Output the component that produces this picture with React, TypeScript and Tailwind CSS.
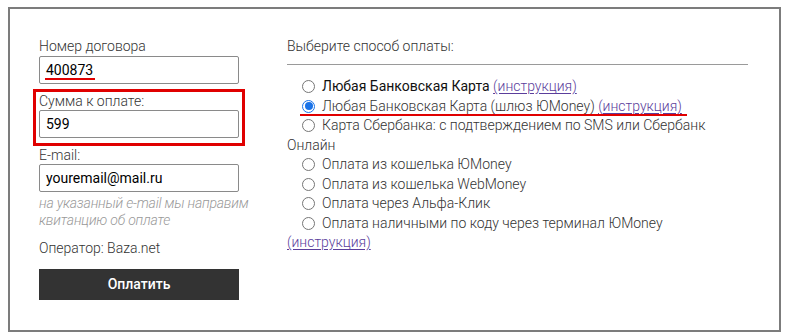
import React from "react";

const Radio = ({ checked = false }: { checked?: boolean }) => (
  <span
    className={
      "inline-block align-[-2px] w-[13px] h-[13px] rounded-full border ml-[15px] mr-[7px] relative " +
      (checked ? "border-[#1a73e8] border-[1.5px]" : "border-[#767676] bg-white")
    }
  >
    {checked && (
      <span className="absolute inset-[1.5px] rounded-full bg-[#1a73e8]" />
    )}
  </span>
);

const Link = ({ children }: { children: React.ReactNode }) => (
  <span className="text-[#5b3e9c] underline underline-offset-2">{children}</span>
);

export default function App() {
  return (
    <div
      className="bg-white w-[789px] h-[336px] pt-[7px] pl-[8px] text-[14px] text-[#333]"
      style={{ fontFamily: "Roboto, 'Liberation Sans', sans-serif" }}
    >
      <div className="w-[773px] h-[325px] border-2 border-[#7c7c7c] flex pt-[28px] pl-[29px]">
        {/* Left column */}
        <div className="w-[200px] flex flex-col">
          <div className="leading-[19px] font-light text-[#333]">Номер договора</div>
          <div className="relative h-[28px] border border-[#8a8a8a] rounded-[2px] pl-[6px] flex items-center text-black">
            400873
            <span className="absolute left-[5px] top-[21px] w-[50px] h-[2px] bg-[#e00000]" />
          </div>
          <div className="mt-[5px] -mx-[6px] border-[3px] border-[#e00000] px-[3px] pb-[5px]">
            <div className="leading-[18px] font-light">Сумма к оплате:</div>
            <div className="h-[28px] border border-[#8a8a8a] rounded-[2px] pl-[6px] flex items-center text-black">
              599
            </div>
          </div>
          <div className="leading-[18px] font-light">E-mail:</div>
          <div className="h-[28px] border border-[#8a8a8a] rounded-[2px] pl-[6px] flex items-center text-black">
            youremail@mail.ru
          </div>
          <div className="mt-[3px] w-[212px] leading-[17px] italic font-light text-[#999] tracking-[-0.2px]">
            на указанный e-mail мы направим
            <br />
            квитанцию об оплате
          </div>
          <div className="mt-[10px] leading-[18px] font-light">Оператор: Baza.net</div>
          <div className="mt-[12px] h-[31px] bg-[#333] text-white font-medium flex items-center justify-center">
            Оплатить
          </div>
        </div>

        {/* Right column */}
        <div className="ml-[48px] w-[461px] flex flex-col">
          <div className="leading-[19px] font-light">Выберите способ оплаты:</div>
          <div className="mt-[8px] h-px bg-[#9a9a9a]" />
          <div className="mt-[12px] leading-[19.5px] font-light">
            <Radio />
            <span className="text-[#111] font-normal">Любая Банковская Карта</span> <Link>(инструкция)</Link>
            <br />
            <span className="relative">
              <Radio checked />
              Любая Банковская Карта (шлюз ЮMoney) <Link>(инструкция)</Link>
              <span className="absolute left-[13px] right-[-5px] top-[16px] h-[2px] bg-[#e00000]" />
            </span>
            <br />
            <Radio />
            Карта Сбербанка: с подтверждением по SMS или Сбербанк Онлайн
            <br />
            <Radio />
            Оплата из кошелька ЮMoney
            <br />
            <Radio />
            Оплата из кошелька WebMoney
            <br />
            <Radio />
            Оплата через Альфа-Клик
            <br />
            <Radio />
            Оплата наличными по коду через терминал ЮMoney <Link>(инструкция)</Link>
          </div>
        </div>
      </div>
    </div>
  );
}
